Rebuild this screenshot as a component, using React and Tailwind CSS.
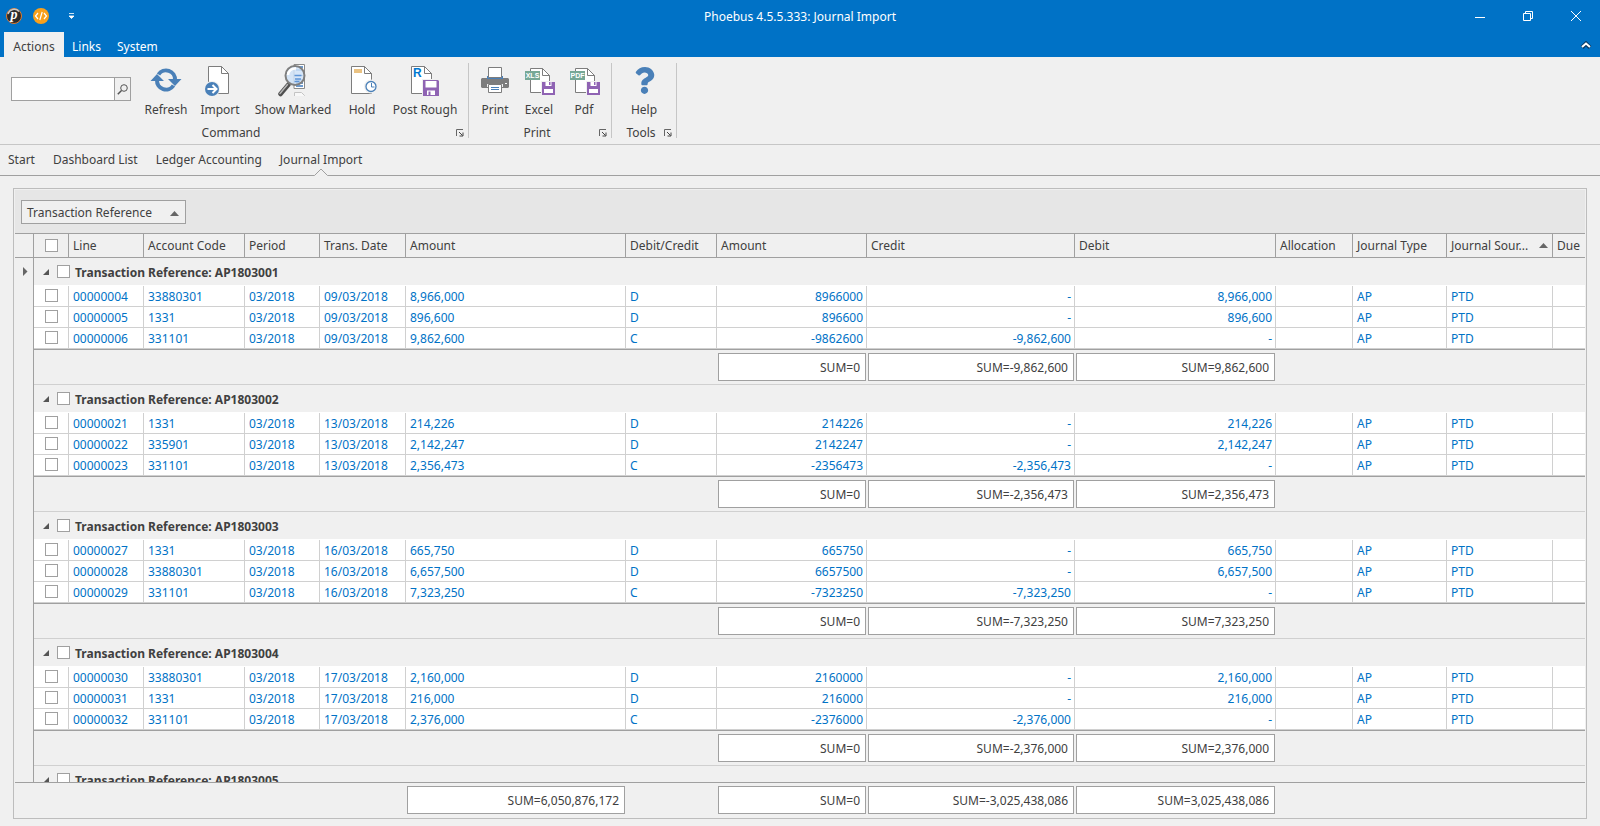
import React, { useState } from 'react';
import { FaQuestion } from 'react-icons/fa';

const groups = [
  {
    ref: 'AP1803001',
    sums: ['0', '-9,862,600', '9,862,600'],
    rows: [
      ['00000004', '33880301', '03/2018', '09/03/2018', '8,966,000', 'D', '8966000', '-', '8,966,000'],
      ['00000005', '1331', '03/2018', '09/03/2018', '896,600', 'D', '896600', '-', '896,600'],
      ['00000006', '331101', '03/2018', '09/03/2018', '9,862,600', 'C', '-9862600', '-9,862,600', '-'],
    ],
  },
  {
    ref: 'AP1803002',
    sums: ['0', '-2,356,473', '2,356,473'],
    rows: [
      ['00000021', '1331', '03/2018', '13/03/2018', '214,226', 'D', '214226', '-', '214,226'],
      ['00000022', '335901', '03/2018', '13/03/2018', '2,142,247', 'D', '2142247', '-', '2,142,247'],
      ['00000023', '331101', '03/2018', '13/03/2018', '2,356,473', 'C', '-2356473', '-2,356,473', '-'],
    ],
  },
  {
    ref: 'AP1803003',
    sums: ['0', '-7,323,250', '7,323,250'],
    rows: [
      ['00000027', '1331', '03/2018', '16/03/2018', '665,750', 'D', '665750', '-', '665,750'],
      ['00000028', '33880301', '03/2018', '16/03/2018', '6,657,500', 'D', '6657500', '-', '6,657,500'],
      ['00000029', '331101', '03/2018', '16/03/2018', '7,323,250', 'C', '-7323250', '-7,323,250', '-'],
    ],
  },
  {
    ref: 'AP1803004',
    sums: ['0', '-2,376,000', '2,376,000'],
    rows: [
      ['00000030', '33880301', '03/2018', '17/03/2018', '2,160,000', 'D', '2160000', '-', '2,160,000'],
      ['00000031', '1331', '03/2018', '17/03/2018', '216,000', 'D', '216000', '-', '216,000'],
      ['00000032', '331101', '03/2018', '17/03/2018', '2,376,000', 'C', '-2376000', '-2,376,000', '-'],
    ],
  },
  { ref: 'AP1803005', sums: null, rows: [] },
];

const headers = [
  'Line', 'Account Code', 'Period', 'Trans. Date', 'Amount', 'Debit/Credit', 'Amount',
  'Credit', 'Debit', 'Allocation', 'Journal Type', 'Journal Sour...', 'Due',
];

const Page = ({ d, fold }) => (
  <g fill="#fff" stroke="#7d7d7d">
    <path d={d} />
    <path d={fold} />
  </g>
);

const RefreshIcon = () => (
  <svg width="34" height="34" viewBox="0 0 34 34">
    <g fill="none" stroke="#4a80b8" strokeWidth="4">
      <path d="M9.500 11.500A9 9 0 0 1 26 17" />
      <path d="M24.500 22.500A9 9 0 0 1 8 17" />
    </g>
    <path d="M19 16h13.500l-6.500 7zM1.500 18H15l-7-7z" fill="#4a80b8" />
  </svg>
);

const ImportIcon = () => (
  <svg width="34" height="34" viewBox="0 0 34 34">
    <Page d="M5.500 30.500V3.500H18.500L25.500 10.500V30.500z" fold="M18.500 3.500V10.500H25.500z" />
    <circle cx="9" cy="26" r="8" fill="#f0f0f0" />
    <circle cx="9" cy="26" r="7" fill="#4a80b8" />
    <path d="M4.500 26h8M9.500 22l4 4-4 4" fill="none" stroke="#fff" strokeWidth="2" />
  </svg>
);

const MarkedIcon = () => (
  <svg width="34" height="34" viewBox="0 0 34 34">
    <path d="M18 1.500h10.500v24H18z" fill="#fff" stroke="#8a8a8a" />
    <path d="M18 12.500h10.500" stroke="#8a8a8a" />
    <path d="M20 4h7M20 7h7M20 17h7M20 20h7M20 23h7" stroke="#3d79c0" strokeWidth="1.500" />
    <path d="M18.500 33v-3.500h7l3 3V33" fill="#f8f8f8" stroke="#c4c4c4" />
    <path d="M12.500 21.500L4.500 31" stroke="#4f4f4f" strokeWidth="4.500" strokeLinecap="round" />
    <path d="M11.500 21.500L4 30.500" stroke="#b5b5b5" strokeWidth="1.500" strokeLinecap="round" />
    <circle cx="19" cy="12.500" r="9.500" fill="#cfe2f7" fillOpacity="0.850" stroke="#7f7f7f" strokeWidth="2" />
    <path d="M12 12a7 7 0 0 1 8-6.500" fill="none" stroke="#fff" strokeWidth="2.500" />
    <path d="M18.500 12.500h7M19 16h6M18.500 18.500h5" stroke="#5f95d6" strokeWidth="1.500" />
  </svg>
);

const HoldIcon = () => (
  <svg width="34" height="34" viewBox="0 0 34 34">
    <Page d="M6.500 30.500V3.500H19.500L26.500 10.500V30.500z" fold="M19.500 3.500V10.500H26.500z" />
    <rect x="9" y="6" width="8" height="4" fill="#eac282" />
    <circle cx="26" cy="23.500" r="7" fill="#f0f0f0" />
    <circle cx="26" cy="23.500" r="5" fill="#fff" stroke="#4a80b8" strokeWidth="1.300" />
    <path d="M26.500 20v4h3" fill="none" stroke="#4a80b8" />
  </svg>
);

const Floppy = ({ x, y, s }) => (
  <svg x={x} y={y} width={s} height={s} viewBox="0 0 16 16">
    <path d="M0 0h15l1 1v15H0z" fill="#8f63b3" />
    <path d="M2.500 1h11v6.500h-11z" fill="#fff" />
    <path d="M4 10.500h8V15H4z" fill="#fff" />
    <path d="M5.500 11.500h2V15h-2z" fill="#8f63b3" />
  </svg>
);

const SmallFloppy = () => (
  <g>
    <path d="M19 18h15v15H19z" fill="#f0f0f0" />
    <path d="M20 19h13v13H20z" fill="#8f63b3" />
    <path d="M23.500 19h6v4h-6zM22 26h9v4h-9z" fill="#fff" />
    <path d="M27 19h1.500v3H27z" fill="#8f63b3" />
  </g>
);

const RoughIcon = () => (
  <svg width="34" height="34" viewBox="0 0 34 34">
    <Page d="M3.500 30.500V3.500H16.500L23.500 10.500V30.500z" fold="M16.500 3.500V10.500H23.500z" />
    <text x="5" y="14" fontSize="12" fontWeight="bold" fontFamily="Liberation Sans, sans-serif" fill="#0078d0">R</text>
    <path d="M14 16h18v18H14z" fill="#f0f0f0" />
    <Floppy x="15" y="17" s="16" />
  </svg>
);

const PrintIcon = () => (
  <svg width="34" height="34" viewBox="0 0 34 34">
    <path d="M5 13h24v2h1l1 1v8l-1 1H4l-1-1v-8l1-1h1z" fill="#7d7d7d" />
    <path d="M5 12h4v3H5zM25 12h4v3h-4z" fill="#f0f0f0" />
    <path d="M9 13h16v3H9z" fill="#4a80b8" />
    <path d="M10.500 4.500h13v10h-13z" fill="#fff" stroke="#7d7d7d" />
    <path d="M9 21h16v3H9z" fill="#f0f0f0" />
    <path d="M10.500 21.500h13v8h-13z" fill="#fff" stroke="#7d7d7d" />
    <path d="M13 24.500h8M13 26.500h8" stroke="#4a80b8" />
    <path d="M27 20h2v1h-2z" fill="#fff" />
  </svg>
);

const ExportIcon = ({ kind }) => (
  <svg width="34" height="34" viewBox="0 0 34 34">
    <Page d="M8.500 29.500V5.500H20.500L27.500 12.500V29.500z" fold="M20.500 5.500V12.500H27.500z" />
    <rect x="3" y="8" width="15" height="9" fill="#77a896" />
    <text x="10.500" y="15" textAnchor="middle" fontSize="7" fontWeight="bold" fontFamily="Liberation Sans, sans-serif" fill="#fff">{kind}</text>
    <SmallFloppy />
  </svg>
);

const HelpIcon = () => (
  <div className="h-[34px] pt-1 text-[#4a80b8]">
    <FaQuestion size={27} />
  </div>
);

const LogoIcon = () => (
  <svg width="16" height="16" viewBox="0 0 16 16">
    <circle cx="8" cy="8" r="7.500" fill="#2b2b2b" stroke="#e07a2c" />
    <path d="M2 6a6.500 6.500 0 0 1 11-2.500" fill="none" stroke="#c9c9c9" strokeWidth="1.500" />
    <text x="8" y="11" textAnchor="middle" fontSize="14" fontStyle="italic" fontWeight="bold" fontFamily="Liberation Serif, serif" fill="#fff">p</text>
  </svg>
);

const CodeIcon = () => (
  <svg width="16" height="16" viewBox="0 0 16 16">
    <circle cx="8" cy="8" r="8" fill="#f9a01b" />
    <path d="M5 5L2.500 8L5 11M11 5l2.500 3L11 11M9.200 4L6.800 12" fill="none" stroke="#fff" strokeWidth="1.200" />
  </svg>
);

const Launcher = () => (
  <button aria-label="More options" className="w-2 h-2">
    <svg width="8" height="8" viewBox="0 0 8 8">
      <path d="M.5 7V.5H7" fill="none" stroke="#666" />
      <path d="M3 3l3.500 3.500M7 3.500V7H3.500" fill="none" stroke="#444" />
    </svg>
  </button>
);

const RibbonButton = ({ icon, label, width }) => (
  <button className={`${width} flex flex-col items-center`}>
    {icon}
    <span className="mt-1 leading-[18px] whitespace-nowrap">{label}</span>
  </button>
);

const RibbonGroup = ({ title, children }) => (
  <section className="flex flex-col border-r border-[#c6c6c6]">
    <div className="flex h-[60px] shrink-0">{children}</div>
    <div className="flex items-center pt-0.5 pr-1">
      <span className="flex-1 pl-1.5 text-center leading-4">{title}</span>
      <Launcher />
    </div>
  </section>
);

const Check = ({ label }) => (
  <input
    type="checkbox"
    aria-label={label}
    className="appearance-none block shrink-0 w-[13px] h-[13px] bg-white border border-[#a0a0a0] checked:bg-[#0072c6]"
  />
);

const SortArrow = () => (
  <svg width="9" height="5" viewBox="0 0 9 5" className="shrink-0">
    <path d="M0 5L4.500 0L9 5z" fill="#666" />
  </svg>
);

const Sum = ({ value }) => (
  <div className="mx-px h-7 leading-7 pr-[5px] bg-white border border-[#a0a0a0] text-right text-[#404040]">
    SUM={value}
  </div>
);

const Columns = () => (
  <colgroup>
    <col className="w-[19px]" />
    <col className="w-[35px]" />
    <col className="w-[75px]" />
    <col className="w-[101px]" />
    <col className="w-[75px]" />
    <col className="w-[86px]" />
    <col className="w-[220px]" />
    <col className="w-[91px]" />
    <col className="w-[150px]" />
    <col className="w-[208px]" />
    <col className="w-[201px]" />
    <col className="w-[77px]" />
    <col className="w-[94px]" />
    <col className="w-[106px]" />
    <col />
  </colgroup>
);

const Group = ({ group, current }) => (
  <tbody>
    <tr className="h-[27px]">
      <td className="border-r border-[#a0a0a0]">
        {current && (
          <svg width="5" height="9" viewBox="0 0 5 9" className="ml-2">
            <path d="M0 0L4.500 4.500L0 9z" fill="#666" />
          </svg>
        )}
      </td>
      <td colSpan={14}>
        <div className="flex items-center pl-[9px]">
          <svg width="6" height="6" viewBox="0 0 6 6" className="mr-2">
            <path d="M6 0V6H0z" fill="#555" />
          </svg>
          <Check label={`Select ${group.ref}`} />
          <span className="pt-0.5 pl-[5px] font-bold">Transaction Reference: {group.ref}</span>
        </div>
      </td>
    </tr>
    {group.rows.length > 0 && (
      <tr className="h-px">
        <td className="border-r border-[#a0a0a0]" />
        <td colSpan={14} className="bg-white" />
      </tr>
    )}
    {group.rows.map((row) => (
      <tr key={row[0]} className="h-[21px] leading-[18px] align-top text-[#0072c6]">
        <td className="border-r border-[#a0a0a0]" />
        <td className="bg-white border-r border-b border-[#d0d0d0] pt-[3px] pl-[11px]">
          <Check label={`Select line ${row[0]}`} />
        </td>
        {[...row, '', 'AP', 'PTD'].map((cell, i) => (
          <td
            key={i}
            className={`bg-white border-r border-b border-[#d0d0d0] pt-0.5 ${i > 5 && i < 9 ? 'text-right pr-[3px]' : 'pl-1'}`}
          >
            {cell}
          </td>
        ))}
        <td className="bg-white border-b border-[#d0d0d0]" />
      </tr>
    ))}
    {group.sums && (
      <tr className="h-9">
        <td className="border-r border-[#a0a0a0]" />
        <td colSpan={7} className="border-t border-t-[#a0a0a0] border-b border-b-[#d0d0d0]" />
        {group.sums.map((sum, i) => (
          <td key={i} className="border-t border-t-[#a0a0a0] border-b border-b-[#d0d0d0]">
            <Sum value={sum} />
          </td>
        ))}
        <td colSpan={4} className="border-t border-t-[#a0a0a0] border-b border-b-[#d0d0d0]" />
      </tr>
    )}
  </tbody>
);

const App = () => {
  const [search, setSearch] = useState('');

  return (
    <div className="h-screen flex flex-col overflow-hidden bg-[#f0f0f0] text-[#404040] text-[12px] font-['Noto_Sans',sans-serif]">
      <header className="bg-[#0072c6] text-white">
        <div className="h-8 grid grid-cols-[1fr_auto_1fr] items-center">
          <div className="flex items-center pl-1.5">
            <LogoIcon />
            <button aria-label="Code" className="ml-[11px]">
              <CodeIcon />
            </button>
            <button aria-label="Customize toolbar" className="ml-5">
              <svg width="5" height="6" viewBox="0 0 5 6">
                <path d="M0 .5h5M0 3h5L2.500 5.500z" fill="#fff" stroke="#fff" strokeWidth=".8" />
              </svg>
            </button>
          </div>
          <h1 className="pt-0.5">Phoebus 4.5.5.333: Journal Import</h1>
          <div className="flex justify-end">
            <button aria-label="Minimize" className="w-12 h-8 flex items-center justify-center">
              <svg width="10" height="10" viewBox="0 0 10 10"><path d="M0 6.500h10" stroke="#fff" /></svg>
            </button>
            <button aria-label="Restore" className="w-12 h-8 flex items-center justify-center">
              <svg width="10" height="10" viewBox="0 0 10 10">
                <path d="M.5 2.500h7v7h-7zM2.500 2.500v-2h7v7h-2" fill="none" stroke="#fff" />
              </svg>
            </button>
            <button aria-label="Close" className="w-12 h-8 flex items-center justify-center">
              <svg width="10" height="10" viewBox="0 0 10 10"><path d="M0 0l10 10M10 0L0 10" stroke="#fff" /></svg>
            </button>
          </div>
        </div>
        <nav className="flex items-center h-[25px] pl-1 pr-2">
          <button className="h-full w-[60px] pt-1 bg-[#f0f0f0] text-[#404040]">Actions</button>
          <button className="h-full px-2 pt-1">Links</button>
          <button className="h-full px-2 pt-1">System</button>
          <button aria-label="Collapse ribbon" className="ml-auto">
            <svg width="12" height="8" viewBox="0 0 12 8">
              <path d="M2 6.500L6 2.500L10 6.500" fill="none" stroke="#0b3a63" strokeWidth="4" />
              <path d="M2 6L6 2.500L10 6" fill="none" stroke="#fff" strokeWidth="2" />
            </svg>
          </button>
        </nav>
      </header>

      <div className="flex h-[88px] pt-1.5 pb-1.5 border-b border-[#c6c6c6]">
        <RibbonGroup title="Command">
          <div className="flex h-6 mt-3.5 ml-[11px] mr-[7px] border border-[#a0a0a0]">
            <input
              type="text"
              aria-label="Search"
              value={search}
              onChange={(e) => setSearch(e.target.value)}
              className="w-[102px] px-1 bg-white outline-none"
            />
            <button aria-label="Find" className="w-4 flex items-center justify-center border-l border-[#a0a0a0]">
              <svg width="11" height="11" viewBox="0 0 11 11">
                <circle cx="7" cy="4" r="3.300" fill="none" stroke="#555" />
                <path d="M4.500 6.500L.8 10.200" stroke="#555" strokeWidth="1.500" />
              </svg>
            </button>
          </div>
          <RibbonButton width="w-14" icon={<RefreshIcon />} label="Refresh" />
          <RibbonButton width="w-[52px]" icon={<ImportIcon />} label="Import" />
          <RibbonButton width="w-[94px]" icon={<MarkedIcon />} label="Show Marked" />
          <RibbonButton width="w-11" icon={<HoldIcon />} label="Hold" />
          <RibbonButton width="w-[82px]" icon={<RoughIcon />} label="Post Rough" />
          <div className="w-0.5" />
        </RibbonGroup>
        <RibbonGroup title="Print">
          <div className="w-1" />
          <RibbonButton width="w-11" icon={<PrintIcon />} label="Print" />
          <RibbonButton width="w-11" icon={<ExportIcon kind="XLS" />} label="Excel" />
          <RibbonButton width="w-[46px]" icon={<ExportIcon kind="PDF" />} label="Pdf" />
          <div className="w-1" />
        </RibbonGroup>
        <RibbonGroup title="Tools">
          <RibbonButton width="w-16" icon={<HelpIcon />} label="Help" />
        </RibbonGroup>
      </div>

      <nav className="flex gap-[18px] pl-2 h-[31px] leading-[30px] border-b border-[#a0a0a0]">
        <a href="#start">Start</a>
        <a href="#dashboards">Dashboard List</a>
        <a href="#ledger">Ledger Accounting</a>
        <a href="#journal" className="relative">
          Journal Import
          <svg width="14" height="8" viewBox="0 0 14 8" className="absolute left-1/2 -translate-x-1/2 -bottom-px">
            <path d="M0 7.500L7 .8L14 7.500V8H0z" fill="#f0f0f0" />
            <path d="M0 7.500H.5L7 1L13.500 7.500H14" fill="none" stroke="#a0a0a0" />
          </svg>
        </a>
      </nav>

      <main className="flex-1 min-h-0 flex flex-col mt-3 mb-[7px] mx-[13px] p-px border border-[#bdbdbd]">
        <div className="h-[43px] shrink-0 pt-2.5 pl-1.5 bg-[#e6e6e6]">
          <button className="w-[165px] h-6 pt-0.5 pl-[5px] pr-1.5 flex items-center justify-between border border-[#a0a0a0] bg-[#f0f0f0]">
            Transaction Reference
            <SortArrow />
          </button>
        </div>
        <div className="flex-1 min-h-0 overflow-hidden">
          <table className="w-full table-fixed border-separate border-spacing-0">
            <Columns />
            <thead>
              <tr className="h-[25px] text-left">
                <td className="border-y border-r border-[#a0a0a0]" />
                <th className="border-y border-r border-[#a0a0a0] pl-[11px]">
                  <Check label="Select all" />
                </th>
                {headers.map((name, i) => (
                  <th
                    key={i}
                    className={`border-y border-[#a0a0a0] pl-1 font-normal whitespace-nowrap ${i < 12 ? 'border-r' : ''}`}
                  >
                    {i === 11 ? (
                      <span className="flex items-center justify-between pr-1">
                        {name}
                        <SortArrow />
                      </span>
                    ) : (
                      name
                    )}
                  </th>
                ))}
              </tr>
            </thead>
            {groups.map((group, i) => (
              <Group key={group.ref} group={group} current={i === 0} />
            ))}
          </table>
        </div>
        <table className="w-full shrink-0 table-fixed border-separate border-spacing-0">
          <Columns />
          <tbody>
            <tr className="h-[35px]">
              <td colSpan={6} className="border-t border-[#a0a0a0]" />
              <td className="border-t border-[#a0a0a0]"><Sum value="6,050,876,172" /></td>
              <td className="border-t border-[#a0a0a0]" />
              <td className="border-t border-[#a0a0a0]"><Sum value="0" /></td>
              <td className="border-t border-[#a0a0a0]"><Sum value="-3,025,438,086" /></td>
              <td className="border-t border-[#a0a0a0]"><Sum value="3,025,438,086" /></td>
              <td colSpan={4} className="border-t border-[#a0a0a0]" />
            </tr>
          </tbody>
        </table>
      </main>
    </div>
  );
};

export default App;
